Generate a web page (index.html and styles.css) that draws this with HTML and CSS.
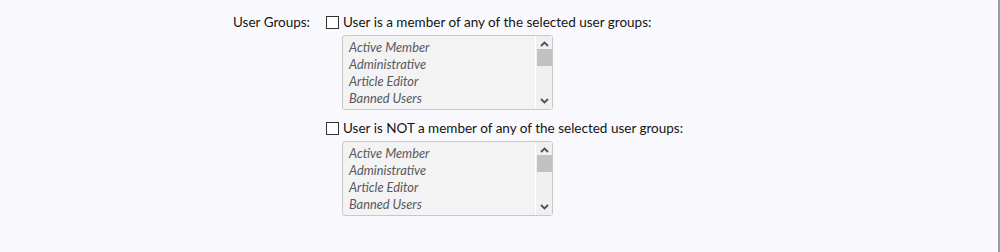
FILE: index.html
```html
<!DOCTYPE html>
<html lang="en">
<head>
    <meta charset="UTF-8">
    <title>User Criteria</title>
    <link rel="stylesheet" href="styles.css">
</head>
<body>
    <div class="page">
        <dl class="ctrl-unit">
            <dt>User Groups:</dt>
            <dd>
                <label class="check-row">
                    <span class="checkbox"></span>
                    User is a member of any of the selected user groups:
                </label>
                <div class="listbox">
                    <ul class="options">
                        <li>Active Member</li>
                        <li>Administrative</li>
                        <li>Article Editor</li>
                        <li>Banned Users</li>
                    </ul>
                    <div class="scrollbar">
                        <svg class="arrow" width="9" height="6" viewBox="0 0 9 6"><path d="M1 5 L4.5 1.5 L8 5" fill="none" stroke="#505050" stroke-width="1.8"/></svg>
                        <span class="thumb"></span>
                        <svg class="arrow down" width="9" height="6" viewBox="0 0 9 6"><path d="M1 1 L4.5 4.5 L8 1" fill="none" stroke="#505050" stroke-width="1.8"/></svg>
                    </div>
                </div>

                <label class="check-row">
                    <span class="checkbox"></span>
                    User is NOT a member of any of the selected user groups:
                </label>
                <div class="listbox">
                    <ul class="options">
                        <li>Active Member</li>
                        <li>Administrative</li>
                        <li>Article Editor</li>
                        <li>Banned Users</li>
                    </ul>
                    <div class="scrollbar">
                        <svg class="arrow" width="9" height="6" viewBox="0 0 9 6"><path d="M1 5 L4.5 1.5 L8 5" fill="none" stroke="#505050" stroke-width="1.8"/></svg>
                        <span class="thumb"></span>
                        <svg class="arrow down" width="9" height="6" viewBox="0 0 9 6"><path d="M1 1 L4.5 4.5 L8 1" fill="none" stroke="#505050" stroke-width="1.8"/></svg>
                    </div>
                </div>
            </dd>
        </dl>
    </div>
</body>
</html>
```

FILE: styles.css
```css
* {
    margin: 0;
    padding: 0;
    box-sizing: border-box;
}

body {
    background: #f9f9fd;
    font-family: Lato, "Open Sans", sans-serif;
    font-size: 13.5px;
    color: #141414;
}

.page {
    height: 252px;
    border-right: 2px solid #8fa0ad;
    padding-top: 14px;
}

.ctrl-unit {
    display: flex;
}

.ctrl-unit dt {
    width: 310px;
    text-align: right;
    line-height: 16px;
}

.ctrl-unit dd {
    padding-left: 16px;
}

.check-row {
    display: flex;
    align-items: center;
    gap: 4px;
    height: 16px;
    line-height: 16px;
}

.checkbox {
    width: 13px;
    height: 13px;
    border: 1px solid #333;
    background: #fff;
}

.listbox {
    display: flex;
    width: 211px;
    height: 75px;
    margin: 5px 0 10px 16px;
    background: #f3f3f3;
    border: 1px solid #c8c8c8;
    border-radius: 3px;
}

.options {
    flex: 1;
    list-style: none;
    padding: 3px 0 0 6px;
    font-style: italic;
    font-size: 12.8px;
    line-height: 17px;
    color: #58585e;
}

.scrollbar {
    width: 17px;
    background: #f0f0f0;
    border-left: 1px solid #fff;
    display: flex;
    flex-direction: column;
    align-items: center;
}

.arrow {
    margin-top: 5px;
}

.thumb {
    width: 15px;
    height: 17px;
    background: #c1c1c1;
    margin-top: 2px;
}

.arrow.down {
    margin-top: auto;
    margin-bottom: 5px;
}
```
